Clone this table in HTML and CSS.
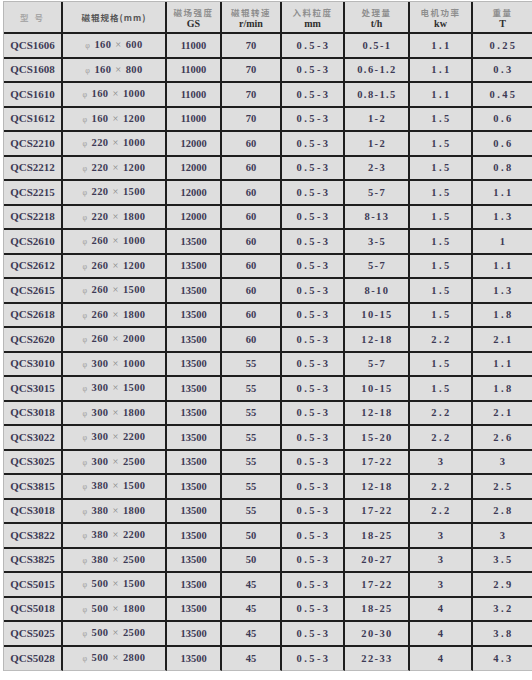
FILE: index.html
```html
<!DOCTYPE html>
<html lang="zh">
<head>
<meta charset="utf-8">
<title>QCS 磁辊参数</title>
<link rel="stylesheet" href="styles.css">
</head>
<body>
<div class="spec">
  <div class="c h"><span class="zh light">型 号</span></div>
  <div class="c h"><span class="zh dark">磁辊规格(mm)</span></div>
  <div class="c h"><span class="zh">磁场强度</span><span class="unit">GS</span></div>
  <div class="c h"><span class="zh">磁辊转速</span><span class="unit">r/min</span></div>
  <div class="c h"><span class="zh">入料粒度</span><span class="unit">mm</span></div>
  <div class="c h"><span class="zh">处理量</span><span class="unit">t/h</span></div>
  <div class="c h"><span class="zh">电机功率</span><span class="unit">kw</span></div>
  <div class="c h"><span class="zh">重量</span><span class="unit">T</span></div>
</div>
<script>
const rows = [
["QCS1606","160","600","11000","70","0.5-3","0.5-1","1.1","0.25"],
["QCS1608","160","800","11000","70","0.5-3","0.6-1.2","1.1","0.3"],
["QCS1610","160","1000","11000","70","0.5-3","0.8-1.5","1.1","0.45"],
["QCS1612","160","1200","11000","70","0.5-3","1-2","1.5","0.6"],
["QCS2210","220","1000","12000","60","0.5-3","1-2","1.5","0.6"],
["QCS2212","220","1200","12000","60","0.5-3","2-3","1.5","0.8"],
["QCS2215","220","1500","12000","60","0.5-3","5-7","1.5","1.1"],
["QCS2218","220","1800","12000","60","0.5-3","8-13","1.5","1.3"],
["QCS2610","260","1000","13500","60","0.5-3","3-5","1.5","1"],
["QCS2612","260","1200","13500","60","0.5-3","5-7","1.5","1.1"],
["QCS2615","260","1500","13500","60","0.5-3","8-10","1.5","1.3"],
["QCS2618","260","1800","13500","60","0.5-3","10-15","1.5","1.8"],
["QCS2620","260","2000","13500","60","0.5-3","12-18","2.2","2.1"],
["QCS3010","300","1000","13500","55","0.5-3","5-7","1.5","1.1"],
["QCS3015","300","1500","13500","55","0.5-3","10-15","1.5","1.8"],
["QCS3018","300","1800","13500","55","0.5-3","12-18","2.2","2.1"],
["QCS3022","300","2200","13500","55","0.5-3","15-20","2.2","2.6"],
["QCS3025","300","2500","13500","55","0.5-3","17-22","3","3"],
["QCS3815","380","1500","13500","55","0.5-3","12-18","2.2","2.5"],
["QCS3018","380","1800","13500","55","0.5-3","17-22","2.2","2.8"],
["QCS3822","380","2200","13500","50","0.5-3","18-25","3","3"],
["QCS3825","380","2500","13500","50","0.5-3","20-27","3","3.5"],
["QCS5015","500","1500","13500","45","0.5-3","17-22","3","2.9"],
["QCS5018","500","1800","13500","45","0.5-3","18-25","4","3.2"],
["QCS5025","500","2500","13500","45","0.5-3","20-30","4","3.8"],
["QCS5028","500","2800","13500","45","0.5-3","22-33","4","4.3"]
];
const grid = document.querySelector('.spec');
rows.forEach((r, i) => {
  const last = i === rows.length - 1;
  const cells = [
    ['model', r[0]],
    ['size', '<span class="phi">φ</span> ' + r[1] + ' <span class="x">×</span> ' + r[2]],
    ['num', r[3]],
    ['num', r[4]],
    ['sp', r[5]],
    ['sp2', r[6]],
    ['sp', r[7]],
    ['sp', r[8]]
  ];
  cells.forEach(([cls, html]) => {
    const d = document.createElement('div');
    d.className = 'c ' + cls + (last ? ' last' : '');
    const s = document.createElement('span');
    s.className = 'v';
    s.innerHTML = html;
    d.appendChild(s);
    grid.appendChild(d);
  });
});
</script>
</body>
</html>
```
FILE: styles.css
```css
html, body {
  margin: 0;
  padding: 0;
  background: #ffffff;
}
.spec {
  display: grid;
  grid-template-columns: 59px 104px 55px 60px 63px 65px 63px 59px;
  grid-template-rows: 32px;
  grid-auto-rows: 24.5px;
  margin: 1px 0 0 3px;
  width: 529px;
  border-top: 1px solid #b8b8b8;
  border-left: 1px solid #b8b8b8;
  background: #dedede;
  font-family: "Liberation Serif", "Times New Roman", serif;
  font-weight: bold;
  font-size: 10.5px;
  color: #3d3a55;
}
.c {
  box-sizing: border-box;
  border-right: 2px solid #1e1e1e;
  border-bottom: 2px solid #1e1e1e;
  display: flex;
  flex-direction: column;
  align-items: center;
  justify-content: center;
  white-space: nowrap;
  line-height: 11px;
}
.c:nth-child(8n) {
  border-right: none;
}
.c.last {
  border-bottom: 1px solid #bcbcbc;
}
.h {
  gap: 0;
  padding-top: 1px;
}
.zh {
  font-family: "Noto Sans CJK SC", "Noto Sans", sans-serif;
  font-size: 8.5px;
  font-weight: bold;
  color: #8e8e8e;
  letter-spacing: 1.5px;
  line-height: 11px;
}
.zh.light {
  color: #a8a8a8;
  letter-spacing: 2px;
}
.zh.dark {
  color: #555555;
  letter-spacing: 1px;
}
.unit {
  font-size: 10px;
  color: #2f2f2f;
  line-height: 11px;
}
.model {
  font-size: 11px;
}
.size .v {
  letter-spacing: 0.4px;
  word-spacing: 1px;
}
.phi {
  color: #a0a0a0;
  font-size: 8px;
  font-weight: normal;
}
.x {
  color: #8a8a8a;
  font-weight: normal;
}
.sp {
  letter-spacing: 2.4px;
  padding-left: 2px;
}
.sp2 {
  letter-spacing: 1.4px;
  padding-left: 1px;
}
```
